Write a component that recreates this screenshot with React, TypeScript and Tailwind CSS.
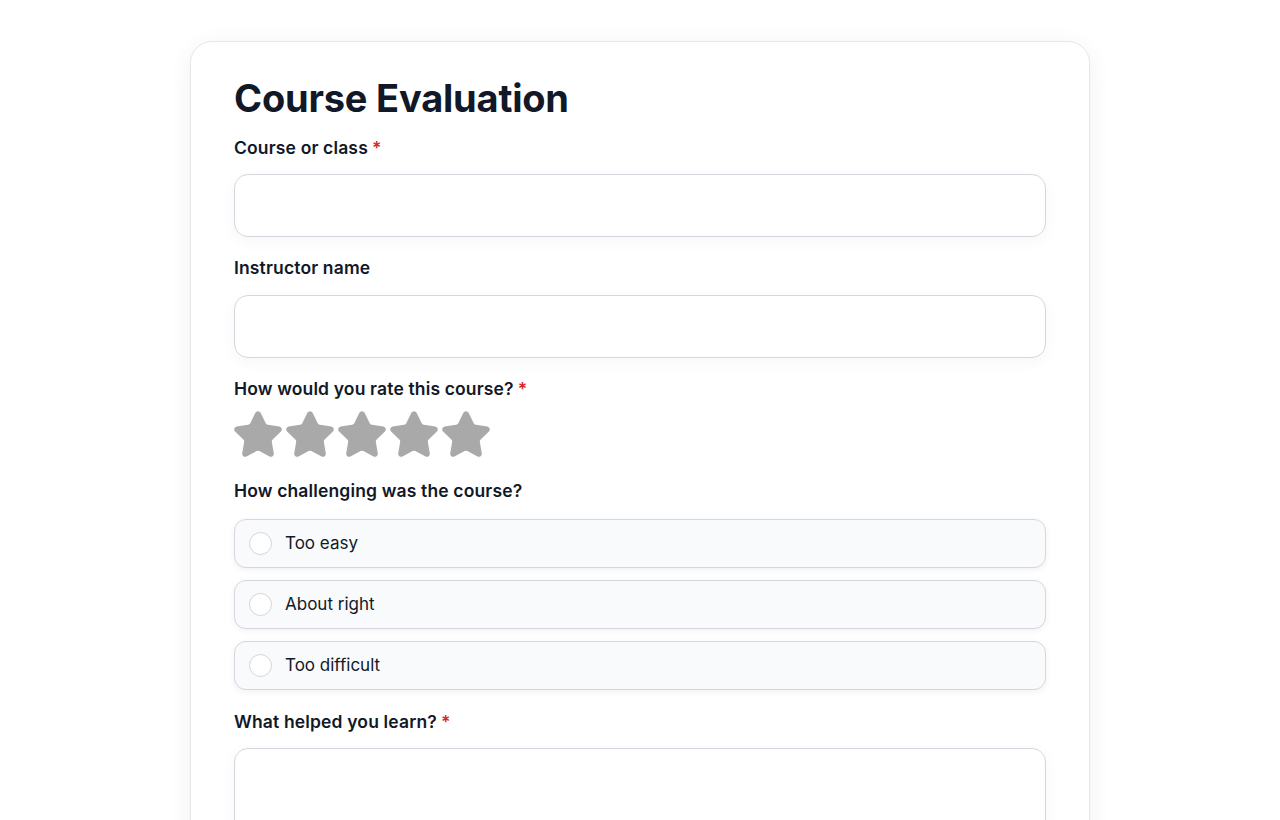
import React, { useState } from "react";

const font = { fontFamily: "Inter, 'Noto Sans', sans-serif" };

const Star = () => (
  <svg
    width="48"
    height="48"
    viewBox="1.1 1.1 21.8 21.8"
    fill="#a9a9a9"
    stroke="#a9a9a9"
    strokeWidth="1.6"
    strokeLinejoin="round"
  >
    <path d="M11.525 2.295a.53.53 0 0 1 .95 0l2.31 4.679a2.123 2.123 0 0 0 1.595 1.16l5.166.756a.53.53 0 0 1 .294.904l-3.736 3.638a2.123 2.123 0 0 0-.611 1.878l.882 5.14a.53.53 0 0 1-.771.56l-4.618-2.428a2.122 2.122 0 0 0-1.973 0L6.396 21.01a.53.53 0 0 1-.77-.56l.881-5.139a2.122 2.122 0 0 0-.611-1.879L2.16 9.795a.53.53 0 0 1 .294-.906l5.165-.755a2.122 2.122 0 0 0 1.597-1.16z" />
  </svg>
);

const Label = ({ text, required }: { text: string; required?: boolean }) => (
  <div className="text-[17.5px] leading-6 font-semibold tracking-[0.15px] text-[#111827]">
    {text}
    {required && <span className="text-[#dc2626] ml-1">*</span>}
  </div>
);

export default function App() {
  const [challenge, setChallenge] = useState<string>("");
  const options = ["Too easy", "About right", "Too difficult"];

  return (
    <div className="min-h-screen bg-white pt-[41px]" style={font}>
      <div className="mx-auto w-[900px] rounded-[22px] border border-[#e5e7eb] bg-white px-[43px] pt-[32px] pb-10 shadow-[0_4px_24px_rgba(0,0,0,0.06)]">
        <h1 className="text-[38px] leading-[48px] font-bold text-[#111827] tracking-[-0.2px]">
          Course Evaluation
        </h1>

        {/* Course */}
        <div className="mt-[14px]">
          <Label text="Course or class" required />
          <input className="mt-[14px] block h-[63px] w-full rounded-[14px] border border-[#d6d6df] bg-white px-4 text-[17px] shadow-[0_4px_16px_rgba(0,0,0,0.04)] outline-none" />
        </div>

        {/* Instructor */}
        <div className="mt-[19px]">
          <Label text="Instructor name" />
          <input className="mt-[15px] block h-[63px] w-full rounded-[14px] border border-[#d6d6df] bg-white px-4 text-[17px] shadow-[0_4px_16px_rgba(0,0,0,0.04)] outline-none" />
        </div>

        {/* Rating */}
        <div className="mt-[19px]">
          <Label text="How would you rate this course?" required />
          <div className="mt-[10px] flex gap-[4px]">
            {[1, 2, 3, 4, 5].map((n) => (
              <Star key={n} />
            ))}
          </div>
        </div>

        {/* Challenge */}
        <div className="mt-[20px]">
          <Label text="How challenging was the course?" />
          <div className="mt-[16px] flex flex-col gap-[12px]">
            {options.map((o) => (
              <label
                key={o}
                onClick={() => setChallenge(o)}
                className="flex h-[49px] items-center gap-[13px] rounded-[12px] border border-[#d6d6df] bg-[#f9fafb] px-[14px] shadow-[0_2px_6px_rgba(0,0,0,0.06)] cursor-pointer"
              >
                <span
                  className={`h-[23px] w-[23px] rounded-full border ${
                    challenge === o ? "border-[#111827]" : "border-[#d1d5db]"
                  } bg-white`}
                />
                <span className="text-[17px] text-[#111827]">{o}</span>
              </label>
            ))}
          </div>
        </div>

        {/* Helped */}
        <div className="mt-[20px]">
          <Label text="What helped you learn?" required />
          <textarea className="mt-[14px] block h-[140px] w-full resize-none rounded-[14px] border border-[#d6d6df] bg-white px-4 py-3 text-[17px] shadow-[0_4px_16px_rgba(0,0,0,0.04)] outline-none" />
        </div>
      </div>
    </div>
  );
}
